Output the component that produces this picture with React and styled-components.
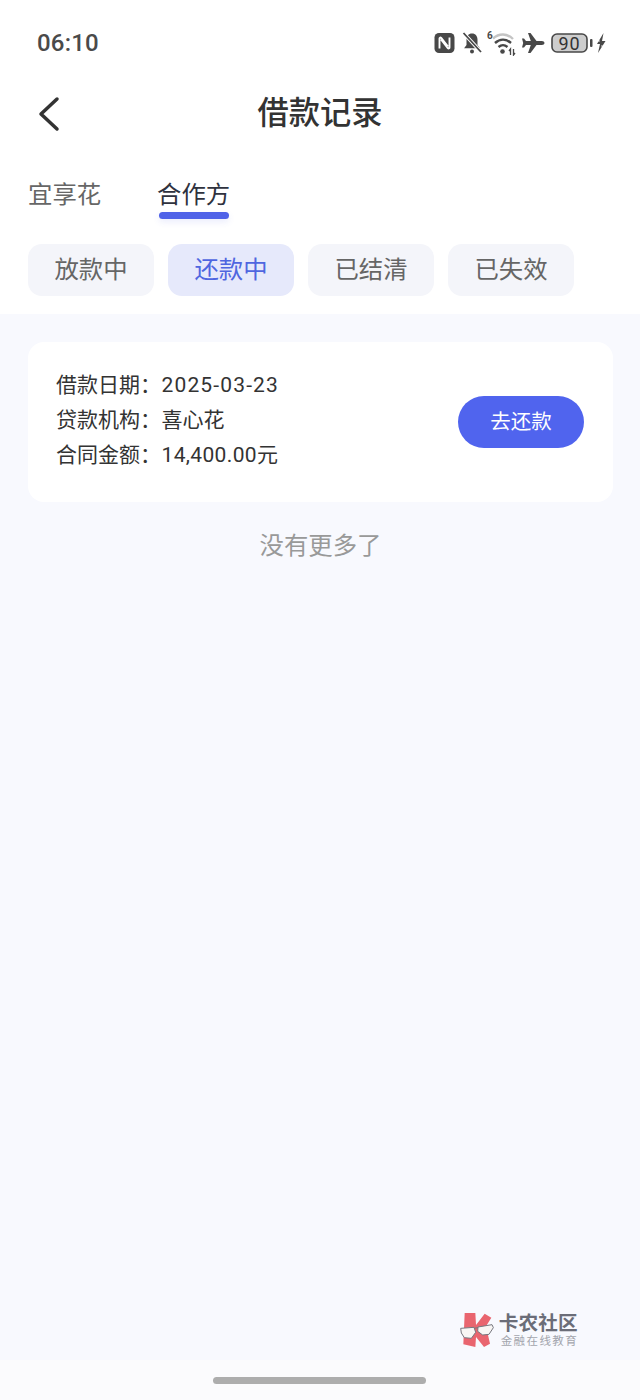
import React from "react";
import styled, { createGlobalStyle } from "styled-components";

const Global = createGlobalStyle`
  html, body { margin: 0; padding: 0; background: #f8f9fe; }
  * { box-sizing: border-box; }
`;
const FONT = `"Roboto", "Noto Sans CJK SC", sans-serif`;

const Page = styled.div`
  width: 640px; height: 1400px; display: flex; flex-direction: column;
  font-family: ${FONT}; background: #f8f9fe; overflow: hidden;
`;
const Top = styled.header`background: #fff; height: 314px; display: flex; flex-direction: column;`;
const StatusBar = styled.div`
  height: 72px; padding: 14px 34px 0 37px; display: flex; align-items: center; justify-content: space-between;
`;
const Time = styled.span`font-size: 24px; font-weight: 500; color: #4a4a4a; letter-spacing: 0.2px;`;
const StatusIcons = styled.div`display: flex; align-items: center;`;
const NavBar = styled.div`
  height: 82px; padding-bottom: 6px; position: relative; display: flex; align-items: center; justify-content: center;
`;
const Back = styled.svg`position: absolute; left: 38px; top: 24px; width: 24px; height: 36px;`;
const Title = styled.h1`margin: 0; font-size: 31.25px; font-weight: 500; color: #333;`;
const Tabs = styled.div`display: flex; gap: 56px; padding: 0 28px; margin-top: 22px; height: 44px;`;
const Tab = styled.div`
  position: relative; font-size: 24.4px; line-height: 38px; width: 73px; white-space: nowrap;
  color: ${p => (p.$active ? "#2f323e" : "#666")};
`;
const Underline = styled.span`
  position: absolute; left: 2px; right: 1px; top: 36px; height: 7px; border-radius: 4px;
  background: #4f62e8; box-shadow: 0 3px 6px rgba(79, 98, 232, .12);
`;
const Chips = styled.div`display: flex; gap: 14px; padding: 0 28px; margin-top: 24px;`;
const Chip = styled.div`
  width: 126px; height: 52px; border-radius: 14px; padding-bottom: 6px;
  display: flex; align-items: center; justify-content: center;
  font-size: 24.4px;
  background: ${p => (p.$active ? "#e6e9fb" : "#f4f5fa")};
  color: ${p => (p.$active ? "#4f66e0" : "#666")};
`;
const Body = styled.main`flex: 1; padding: 28px 27px 0 28px; display: flex; flex-direction: column; position: relative;`;
const Card = styled.section`
  height: 160px; background: #fff; border-radius: 16px; padding: 0 29px 0 28px;
  display: flex; align-items: center; justify-content: space-between;
`;
const Info = styled.div`display: flex; flex-direction: column; padding-bottom: 4px;`;
const Row = styled.div`font-size: 21px; line-height: 35px; color: #333; white-space: nowrap; display: flex;`;
const Label = styled.span`width: 105.500px;`;
const Value = styled.span`letter-spacing: ${p => p.$spread || 0}px;`;
const PayButton = styled.button`
  width: 126px; height: 52px; border: 0; border-radius: 26px; background: #5064ee; color: #fff;
  font-family: ${FONT}; font-size: 20.500px; padding: 0 0 4px;
`;
const NoMore = styled.div`text-align: center; font-size: 24.4px; color: #999; margin-top: 26px; line-height: 36px;`;
const Watermark = styled.div`
  position: absolute; left: 459px; top: 997px; display: flex; align-items: flex-start;
`;
const MarkText = styled.div`display: flex; flex-direction: column; color: #6b6d78; padding-top: 3px; margin-left: 3px;`;
const MarkTitle = styled.span`font-size: 19.6px; font-weight: 700; line-height: 20px; letter-spacing: .2px;`;
const MarkSub = styled.span`font-size: 11.5px; line-height: 14px; letter-spacing: 1.4px; color: #a3a5ad; margin-left: 2px;`;
const HomeArea = styled.footer`
  height: 40px; background: #fbfbfd; display: flex; justify-content: center; padding: 17px 1px 0 0;
`;
const HomeBar = styled.div`width: 213px; height: 7px; border-radius: 4px; background: #adadad;`;

const Ic = "#484848";
const Nfc = () => (
  <svg width="21" height="22" viewBox="0 0 21 22" style={{ marginRight: 6 }}>
    <rect x="0.500" y="1" width="20" height="20" rx="4.500" fill={Ic} />
    <path d="M5.500 16.500V6.500c0-1 1-1.300 1.700-.6L14 14.500M15.500 5.500v10c0 1-1 1.300-1.700.6L7 7.500" stroke="#fff" strokeWidth="1.900" fill="none" />
  </svg>
);
const Bell = () => (
  <svg width="22" height="24" viewBox="0 0 22 24" style={{ marginRight: 4 }}>
    <path d="M11 2.500c-3.600 0-5.500 2.700-5.500 6V14l-2.400 3.200h15.800L16.500 14V8.500c0-3.300-1.900-6-5.500-6z" fill={Ic} />
    <circle cx="11" cy="20.500" r="2" fill={Ic} />
    <path d="M2.500 2l17.500 19" stroke="#fff" strokeWidth="3.500" />
    <path d="M2.500 2l17.500 19" stroke={Ic} strokeWidth="1.800" />
  </svg>
);
const Wifi = () => (
  <svg width="30" height="26" viewBox="0 0 30 26" style={{ marginRight: 4 }}>
    <text x="0" y="9" fontSize="10" fontWeight="700" fontFamily="Roboto" fill={Ic}>6</text>
    <path d="M6 8.500C12 3 20 3 26 9" stroke="#c4c4c4" strokeWidth="2.400" fill="none" />
    <path d="M8 13c5-4.500 11-4.500 16 0" stroke={Ic} strokeWidth="2.400" fill="none" />
    <path d="M11.500 17c3-2.500 6-2.500 9 0" stroke={Ic} strokeWidth="2.400" fill="none" />
    <circle cx="15.500" cy="21.500" r="2.300" fill={Ic} />
    <path d="M23.500 25v-6l-1.500 2M26.500 19v6l1.500-2" stroke={Ic} strokeWidth="1.300" fill="none" />
  </svg>
);
const Plane = () => (
  <svg width="24" height="22" viewBox="0 0 24 22" style={{ marginRight: 6 }}>
    <path d="M23.500 11c0-1.300-1.300-2-2.600-2H15.500L9.500 1H7l2.800 8H5L3 6.500H1L2.200 11 1 15.500h2L5 13h4.800L7 21h2.500l6-8h5.400c1.300 0 2.600-.7 2.600-2z" fill={Ic} />
  </svg>
);
const Battery = () => (
  <svg width="44" height="20" viewBox="0 0 44 20" style={{ marginRight: 1 }}>
    <rect x="1" y="1" width="35" height="18" rx="5" fill="#cdcdcd" stroke={Ic} strokeWidth="1.600" />
    <text x="18.500" y="16.500" textAnchor="middle" fontSize="18" letterSpacing="1" fontFamily="Roboto" fill="#333">90</text>
    <rect x="39" y="6" width="2.500" height="8" rx="1" fill={Ic} />
  </svg>
);
const Bolt = () => (
  <svg width="10" height="20" viewBox="0 0 10 20">
    <path d="M7.500 0L1 11h3l-2 9 7.500-12H6z" fill={Ic} />
    <path d="M0 8h4M5 13h5" stroke="#fff" strokeWidth="0.800" />
  </svg>
);
const Logo = () => (
  <svg width="36.700" height="40" viewBox="15 20 110 120">
    <path d="M32 26h32l2 36 26-34 20 12-16 26 12 52-18 10-24-30-2 30-36-8z" fill="#e9656f" />
    <path d="M20 72l40-3 5 15-13 18-21-2-9-14z" fill="#f8f6f4" stroke="#77777f" strokeWidth="3" />
    <path d="M72 68l42-7 4 9-13 20-19 2-15-11z" fill="#f8f6f4" stroke="#77777f" strokeWidth="3" />
    <path d="M60 72l12-2" stroke="#77777f" strokeWidth="3" />
  </svg>
);

export default function App() {
  return (
    <Page>
      <Global />
      <Top>
        <StatusBar>
          <Time>06:10</Time>
          <StatusIcons><Nfc /><Bell /><Wifi /><Plane /><Battery /><Bolt /></StatusIcons>
        </StatusBar>
        <NavBar>
          <Back viewBox="0 0 24 36"><path d="M19 3L3 18l16 15" fill="none" stroke="#333" strokeWidth="3.500" strokeLinecap="round" strokeLinejoin="round" /></Back>
          <Title>借款记录</Title>
        </NavBar>
        <Tabs>
          <Tab>宜享花</Tab>
          <Tab $active>合作方<Underline /></Tab>
        </Tabs>
        <Chips>
          <Chip>放款中</Chip>
          <Chip $active>还款中</Chip>
          <Chip>已结清</Chip>
          <Chip>已失效</Chip>
        </Chips>
      </Top>
      <Body>
        <Card>
          <Info>
            <Row><Label>借款日期：</Label><Value $spread={1.150}>2025-03-23</Value></Row>
            <Row><Label>贷款机构：</Label><Value>喜心花</Value></Row>
            <Row><Label>合同金额：</Label><Value $spread={0.350}>14,400.00元</Value></Row>
          </Info>
          <PayButton>去还款</PayButton>
        </Card>
        <NoMore>没有更多了</NoMore>
        <Watermark>
          <Logo />
          <MarkText><MarkTitle>卡农社区</MarkTitle><MarkSub>金融在线教育</MarkSub></MarkText>
        </Watermark>
      </Body>
      <HomeArea><HomeBar /></HomeArea>
    </Page>
  );
}
